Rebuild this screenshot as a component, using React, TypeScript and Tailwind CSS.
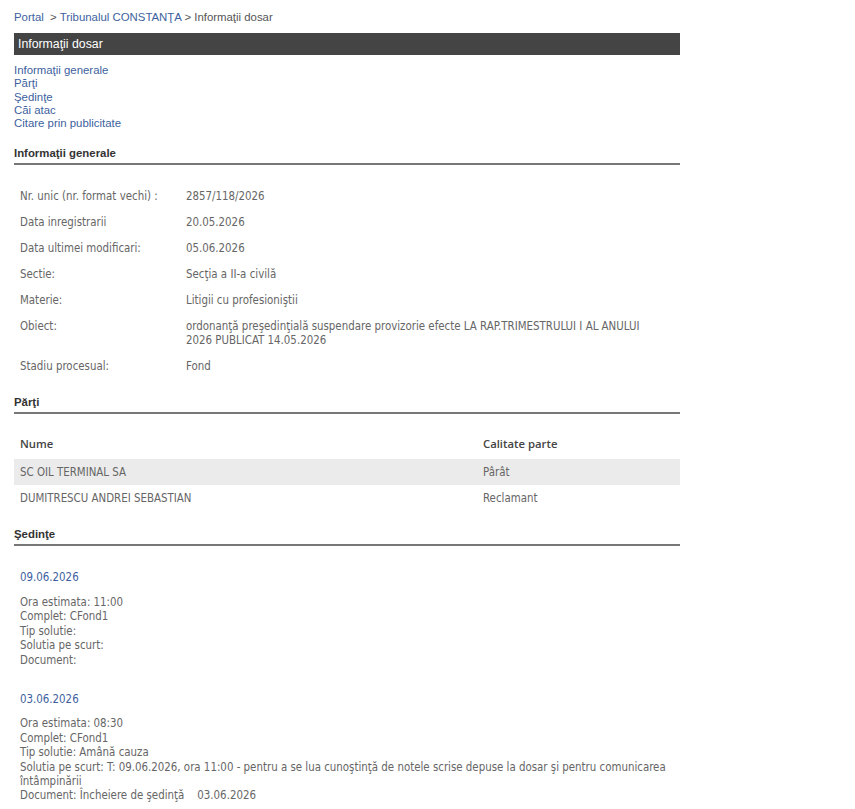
import React from "react";

const info: [string, string[]][] = [
  ["Nr. unic (nr. format vechi) :", ["2857/118/2026"]],
  ["Data inregistrarii", ["20.05.2026"]],
  ["Data ultimei modificari:", ["05.06.2026"]],
  ["Sectie:", ["Secţia a II-a civilă"]],
  ["Materie:", ["Litigii cu profesioniştii"]],
  [
    "Obiect:",
    [
      "ordonanţă preşedinţială suspendare provizorie efecte LA RAP.TRIMESTRULUI I AL ANULUI",
      "2026 PUBLICAT 14.05.2026",
    ],
  ],
  ["Stadiu procesual:", ["Fond"]],
];

function Heading({ children }: { children: React.ReactNode }) {
  return (
    <div className="font-['Liberation_Sans',Arial,sans-serif] text-[11.4px] leading-[14px] font-bold text-[#333] pb-[3px] border-b-2 border-[#777]">
      {children}
    </div>
  );
}

const body = "font-['DejaVu_Sans_Condensed','DejaVu_Sans',sans-serif] text-[11.4px] text-[#666]";

export default function App() {
  return (
    <div className="bg-white min-h-[809px] w-[855px]">
      <div className="ml-[14px] w-[666px] pt-[10px]">
        <div className="font-['Liberation_Sans',Arial,sans-serif] text-[11.4px] leading-[14px] text-[#555]">
          <span className="text-[#3d5f9e]">Portal</span>
          <span> &nbsp;&gt; </span>
          <span className="text-[#3d5f9e]">Tribunalul CONSTANŢA</span>
          <span> &gt; Informaţii dosar</span>
        </div>
        <div className="mt-[9px] h-[22px] bg-[#444] flex items-center pl-[4px] font-['Liberation_Sans',Arial,sans-serif] text-[12.3px] text-white">
          Informaţii dosar
        </div>
        <div className="mt-[9px] flex flex-col font-['Liberation_Sans',Arial,sans-serif] text-[11.4px] leading-[13.3px] text-[#3d5f9e]">
          <span>Informaţii generale</span>
          <span>Părţi</span>
          <span>Şedinţe</span>
          <span>Căi atac</span>
          <span>Citare prin publicitate</span>
        </div>

        <div className="mt-[16px]">
          <Heading>Informaţii generale</Heading>
        </div>
        <div className={`mt-[18px] ${body}`}>
          {info.map(([k, v]) => (
            <div key={k} className="flex py-[6px] leading-[14px]">
              <div className="w-[172px] pl-[6px] shrink-0">{k}</div>
              <div>
                {v.map((l) => (
                  <div key={l}>{l}</div>
                ))}
              </div>
            </div>
          ))}
        </div>

        <div className="mt-[16px]">
          <Heading>Părţi</Heading>
        </div>
        <div className="mt-[17px]">
          <div className="flex h-[28px] pb-[2px] items-center font-['Open_Sans',sans-serif] text-[11.3px] font-semibold text-[#444]">
            <div className="w-[469px] pl-[6px]">Nume</div>
            <div>Calitate parte</div>
          </div>
          <div className={`flex h-[26px] items-center bg-[#ebebeb] ${body}`}>
            <div className="w-[469px] pl-[6px]">SC OIL TERMINAL SA</div>
            <div>Pârât</div>
          </div>
          <div className={`flex h-[26px] items-center ${body}`}>
            <div className="w-[469px] pl-[6px]">DUMITRESCU ANDREI SEBASTIAN</div>
            <div>Reclamant</div>
          </div>
        </div>

        <div className="mt-[16px]">
          <Heading>Şedinţe</Heading>
        </div>
        <div className={`pl-[6px] ${body} leading-[14.4px]`}>
          <div className="mt-[24px] text-[#3d5f9e]">09.06.2026</div>
          <div className="mt-[10px]">
            <div>Ora estimata: 11:00</div>
            <div>Complet: CFond1</div>
            <div>Tip solutie:</div>
            <div>Solutia pe scurt:</div>
            <div>Document:</div>
          </div>
          <div className="mt-[25px] text-[#3d5f9e]">03.06.2026</div>
          <div className="mt-[10px]">
            <div>Ora estimata: 08:30</div>
            <div>Complet: CFond1</div>
            <div>Tip solutie: Amână cauza</div>
            <div className="w-[655px]">
              Solutia pe scurt: T: 09.06.2026, ora 11:00 - pentru a se lua cunoştinţă de notele scrise depuse la dosar şi pentru comunicarea întâmpinării
            </div>
            <div>
              Document: Încheiere de şedinţă&nbsp;&nbsp;&nbsp; 03.06.2026
            </div>
          </div>
        </div>
      </div>
    </div>
  );
}
